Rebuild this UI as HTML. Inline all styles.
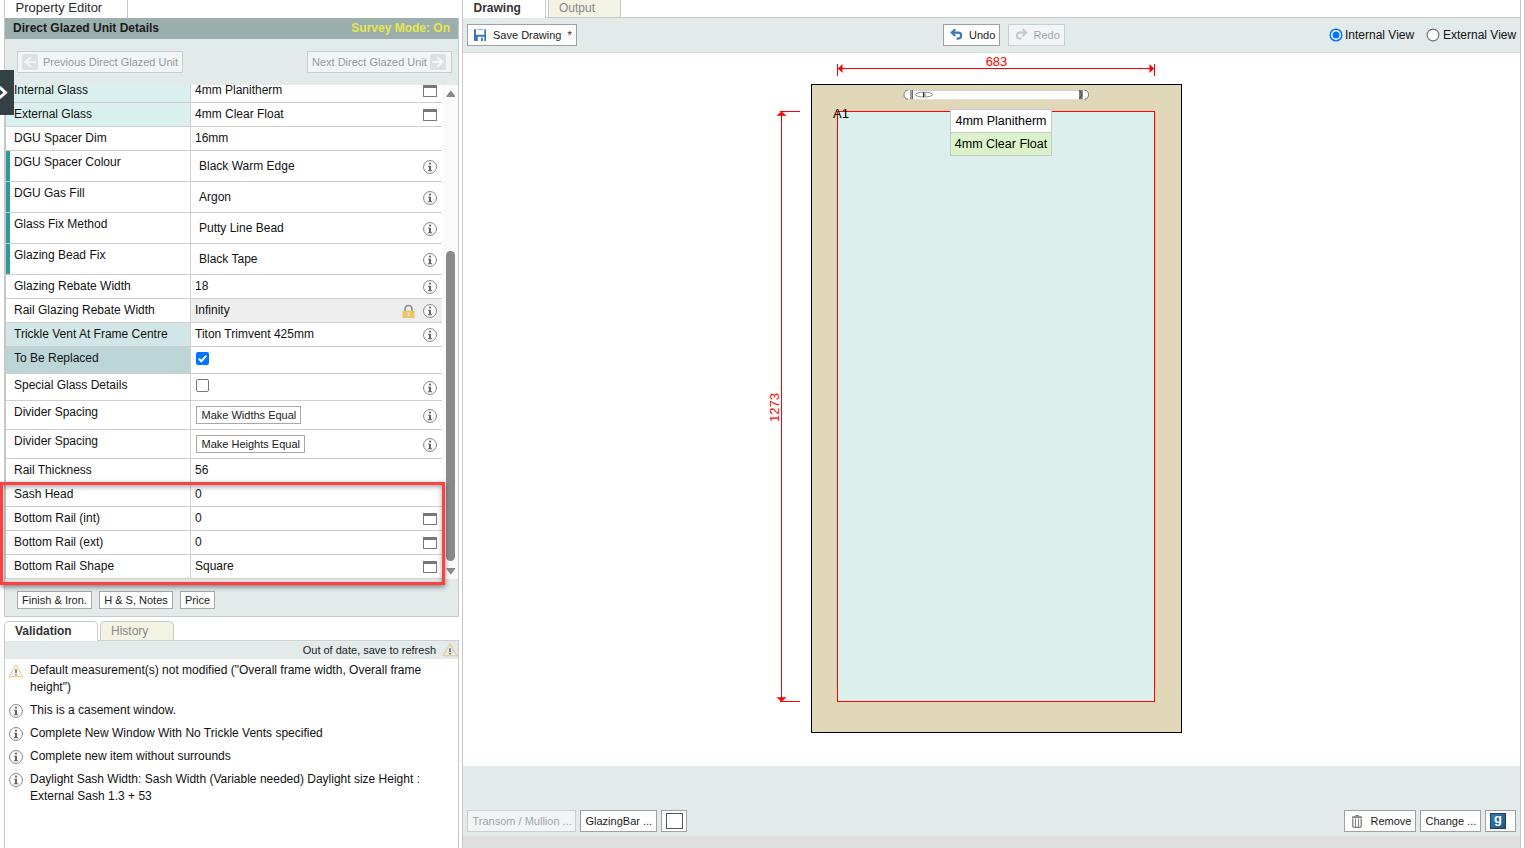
<!DOCTYPE html>
<html><head><meta charset="utf-8"><title>Property Editor</title>
<style>
*{box-sizing:border-box;margin:0;padding:0}
html,body{width:1525px;height:848px;overflow:hidden;background:#fff;font-family:"Liberation Sans",Arial,sans-serif;font-size:12px;color:#111}
.abs{position:absolute}
#left{position:absolute;left:4px;top:0;width:455px;height:848px;border-left:1px solid #c8c8c8;border-right:1px solid #c8c8c8}
#right{position:absolute;left:462px;top:0;width:1059px;height:848px;border-left:1px solid #c8c8c8;border-right:1px solid #c8c8c8}
#outerR{position:absolute;left:1524px;top:0;width:1px;height:848px;background:#c8c8c8}
.tab{position:absolute;top:-4px;height:22px;border:1px solid #c8c8c8;border-bottom:none;border-radius:5px 5px 0 0;background:#fff;font-size:13px;padding:4px 0 0 10px;color:#222;white-space:nowrap}
.tab.off{background:#f3f3e3;color:#888}
.tab.act{font-size:12px;font-weight:bold;color:#333;z-index:3}
.tab.off{font-size:12px}
#pe-box{position:absolute;left:0;top:18px;width:453px;height:599px;border-bottom:1px solid #c8c8c8;background:#e2ebea}
#hdr{position:absolute;left:0;top:0;width:453px;height:21px;background:#9bafaf;font-weight:bold;font-size:12px;color:#1a1a1a;padding:3px 0 0 8px}
#hdr span{position:absolute;right:8px;top:3px;color:#e6e64a}
.navbtn{position:absolute;top:33px;height:22px;border:1px solid #c9cfcf;background:#f1f5f5;color:#9a9a9a;font-size:11px;line-height:20px;white-space:nowrap}
.navbtn i{position:absolute;top:2px;width:16px;height:16px;background:#dce0e0;border-radius:2px}
#grid{position:absolute;left:0;top:67px;width:438px;height:494px;overflow:hidden;background:#fff}
#rows{position:absolute;left:0;top:-6px;width:437px;border-left:1px solid #c6c6c6}
.r{position:relative;width:436px;border-bottom:1px solid #cfcfcf;height:24px}
.r .l{position:absolute;left:0;top:0;bottom:0;width:185px;border-right:1px solid #cfcfcf;padding:4px 0 0 8px;white-space:nowrap}
.r .v{position:absolute;left:185px;top:0;bottom:0;right:0;padding:4px 0 0 4px;white-space:nowrap}
.r.t .l{border-left:4px solid #2e9a98;padding-left:4px;padding-top:4px}
.r.t .v{padding-left:8px;padding-top:8px}
.hl1 .l{background:#daf0ee}
.hl2 .l{background:#d3e6e7}
.hl3 .l{background:#bcd6d8}
.win{position:absolute;left:232px;top:6px;width:14px;height:12px;border:1px solid #777;border-top:3px solid #777;background:#fff}
.info{position:absolute;left:232px;width:14px;height:14px}
.sbtn{display:inline-block;border:1px solid #a8a8a8;background:#fff;font-size:11px;height:18px;line-height:16px;padding:0 0 0 4.5px;margin-top:1px;color:#222;white-space:nowrap}
#sb{position:absolute;left:438px;top:67px;width:15px;height:494px;background:#fafafa}
#sb .th{position:absolute;left:3px;top:166px;width:9px;height:310px;border-radius:5px;background:#8a8a8a}
.fbtn{position:absolute;top:573px;height:18px;border:1px solid #a8a8a8;background:#fff;font-size:11px;line-height:16px;text-align:center;color:#222;white-space:nowrap}
#redbox{position:absolute;left:0px;top:482px;width:445px;height:103px;border:3px solid #fd4040;box-shadow:0 2px 5px rgba(0,0,0,.45), inset 0 2px 5px rgba(0,0,0,.35);pointer-events:none}
#valbar{position:absolute;left:0;top:640px;width:453px;height:19px;background:#e2ebea;border-top:1px solid #d0d0d0;font-size:11px;color:#222;text-align:right;padding:3px 22px 0 0}
.vi{position:absolute;left:25px;font-size:12px;line-height:17px;color:#111;width:420px}
.vic{position:absolute;left:4px;width:14px;height:14px}
.tbtn{position:absolute;height:22px;border:1px solid #a0a0a0;background:#fff;font-size:11px;line-height:20px;color:#222;white-space:nowrap}
.tbtn.dis{color:#a5a5a5;background:#f1f5f5;border-color:#c9cfcf}
#tb{position:absolute;left:0;top:17px;width:1057px;height:36px;background:#e2ebea;border-top:1px solid #c8c8c8;border-bottom:1px solid #d8dede}
#bb{position:absolute;left:0;top:766px;width:1057px;height:70px;background:#e2ebea}
#gb{position:absolute;left:0;top:836px;width:1057px;height:12px;background:#e0e0e0}
.radio{position:absolute;top:29px;width:13px;height:13px;border-radius:50%;border:1.200px solid #6f6f6f;background:#fff}
.radio.on{border:1.600px solid #0075ff}
.radio.on:after{content:"";position:absolute;left:1.300px;top:1.300px;width:7.200px;height:7.200px;border-radius:50%;background:#0075ff}
.rl{position:absolute;top:28px;font-size:12px;color:#111;white-space:nowrap}
</style></head><body>
<svg width="0" height="0" style="position:absolute">
 <defs>
  <symbol id="i" viewBox="0 0 14 14"><circle cx="7" cy="7" r="6.45" fill="#fff" stroke="#777" stroke-width="0.9"/><circle cx="7" cy="3.6" r="1.1" fill="#666"/><path d="M5.100 5.800h2.900v4.500h1.200v0.950h-4.400v-0.950h1.200v-3.600h-0.900z" fill="#666"/></symbol>
  <symbol id="w" viewBox="0 0 16 14"><path d="M8 1 L15 12.8 H1 Z" fill="none" stroke="#f2bd62" stroke-width="0.9" stroke-linejoin="round"/><rect x="7.3" y="5.2" width="1.4" height="3.8" fill="#555"/><rect x="7.3" y="10" width="1.4" height="1.4" fill="#555"/></symbol>
 </defs>
</svg>
<div id="left">
  <div class="tab" style="left:-1px;width:124px;color:#2a2a2a;z-index:3;padding-top:3px;padding-left:10.500px">Property Editor</div>
  <div id="pe-box">
    <div id="hdr">Direct Glazed Unit Details<span>Survey Mode: On</span></div>
    <div class="navbtn" style="left:12px;width:166px;padding-left:25px"><i style="left:4px"></i><svg class="abs" style="left:4px;top:2px" width="16" height="16" viewBox="0 0 16 16"><path d="M13.700 8H3.200M8.800 3.200L3.400 8l5.400 4.800" fill="none" stroke="#f2f5f5" stroke-width="2.100"/></svg>Previous Direct Glazed Unit</div>
    <div class="navbtn" style="left:302px;width:145px;padding-left:4px">Next Direct Glazed Unit<i style="left:122px"></i><svg class="abs" style="left:122px;top:2px" width="16" height="16" viewBox="0 0 16 16"><path d="M2.300 8H12.800M7.200 3.200L12.600 8l-5.400 4.800" fill="none" stroke="#f2f5f5" stroke-width="2.100"/></svg></div>
    <div id="grid"><div id="rows">
      <div class="r hl1"><div class="l">Internal Glass</div><div class="v">4mm Planitherm<b class="win"></b></div></div>
      <div class="r hl1"><div class="l">External Glass</div><div class="v">4mm Clear Float<b class="win"></b></div></div>
      <div class="r"><div class="l">DGU Spacer Dim</div><div class="v">16mm</div></div>
      <div class="r t" style="height:31px"><div class="l">DGU Spacer Colour</div><div class="v">Black Warm Edge<svg class="info" style="top:9px"><use href="#i"/></svg></div></div>
      <div class="r t" style="height:31px"><div class="l">DGU Gas Fill</div><div class="v">Argon<svg class="info" style="top:9px"><use href="#i"/></svg></div></div>
      <div class="r t" style="height:31px"><div class="l">Glass Fix Method</div><div class="v">Putty Line Bead<svg class="info" style="top:9px"><use href="#i"/></svg></div></div>
      <div class="r t" style="height:31px"><div class="l">Glazing Bead Fix</div><div class="v">Black Tape<svg class="info" style="top:9px"><use href="#i"/></svg></div></div>
      <div class="r"><div class="l">Glazing Rebate Width</div><div class="v">18<svg class="info" style="top:5px"><use href="#i"/></svg></div></div>
      <div class="r"><div class="l">Rail Glazing Rebate Width</div><div class="v" style="background:#eee">Infinity<svg class="abs" style="left:211px;top:5px" width="13" height="14" viewBox="0 0 13 14"><path d="M3 7V5a3.5 3.5 0 0 1 7 0v2" fill="none" stroke="#8a8a8a" stroke-width="1.6"/><rect x="0.5" y="6.7" width="12" height="7.3" fill="#ecc46a"/><rect x="5.8" y="8.6" width="1.4" height="1.3" fill="#fff"/><rect x="5.8" y="10.7" width="1.4" height="1.3" fill="#fff"/></svg><svg class="info" style="top:5px"><use href="#i"/></svg></div></div>
      <div class="r hl2"><div class="l">Trickle Vent At Frame Centre</div><div class="v">Titon Trimvent 425mm<svg class="info" style="top:5px"><use href="#i"/></svg></div></div>
      <div class="r hl3" style="height:27px"><div class="l">To Be Replaced</div><div class="v"><svg class="abs" style="left:5px;top:5px" width="13" height="13" viewBox="0 0 13 13"><rect width="13" height="13" rx="2" fill="#0075ff"/><path d="M2.800 6.600l2.500 2.600L10.300 3.700" fill="none" stroke="#fff" stroke-width="2"/></svg></div></div>
      <div class="r" style="height:27px"><div class="l">Special Glass Details</div><div class="v"><span class="abs" style="left:5px;top:5px;width:13px;height:13px;border:1px solid #767676;border-radius:2px;background:#fff"></span><svg class="info" style="top:7px"><use href="#i"/></svg></div></div>
      <div class="r" style="height:29px"><div class="l">Divider Spacing</div><div class="v" style="padding-left:5px"><span class="sbtn" style="width:105px">Make Widths Equal</span><svg class="info" style="top:8px"><use href="#i"/></svg></div></div>
      <div class="r" style="height:29px"><div class="l">Divider Spacing</div><div class="v" style="padding-left:5px"><span class="sbtn" style="width:109px">Make Heights Equal</span><svg class="info" style="top:8px"><use href="#i"/></svg></div></div>
      <div class="r"><div class="l">Rail Thickness</div><div class="v">56</div></div>
      <div class="r"><div class="l">Sash Head</div><div class="v">0</div></div>
      <div class="r"><div class="l">Bottom Rail (int)</div><div class="v">0<b class="win"></b></div></div>
      <div class="r"><div class="l">Bottom Rail (ext)</div><div class="v">0<b class="win"></b></div></div>
      <div class="r"><div class="l">Bottom Rail Shape</div><div class="v">Square<b class="win"></b></div></div>
    </div></div>
    <div id="sb"><div class="th"></div>
      <svg class="abs" style="left:3px;top:5px" width="10" height="7" viewBox="0 0 10 7"><path d="M1 6.300L4.800 1.300l3.800 5z" fill="#8a8a8a" stroke="#8a8a8a" stroke-width="1.200" stroke-linejoin="round"/></svg>
      <svg class="abs" style="left:3px;top:483px" width="10" height="7" viewBox="0 0 10 7"><path d="M1 0.700L4.800 5.700l3.800-5z" fill="#8a8a8a" stroke="#8a8a8a" stroke-width="1.200" stroke-linejoin="round"/></svg>
    </div>
    <div class="fbtn" style="left:12px;width:75px">Finish &amp; Iron.</div>
    <div class="fbtn" style="left:94px;width:74px">H &amp; S, Notes</div>
    <div class="fbtn" style="left:175px;width:35px">Price</div>
  </div>
  <div class="tab act" style="left:-1px;top:621px;height:20px;width:94px;padding-top:2px">Validation</div>
  <div class="tab off" style="left:95px;top:621px;height:19px;width:74px;padding-top:2px">History</div>
  <div id="valbar">Out of date, save to refresh<svg class="abs" style="right:0px;top:2px" width="16" height="14"><use href="#w"/></svg></div>
  <svg class="vic" style="top:664px;width:16px;left:3px"><use href="#w"/></svg><div class="vi" style="top:662px">Default measurement(s) not modified ("Overall frame width, Overall frame height")</div>
  <svg class="vic" style="top:704px"><use href="#i"/></svg><div class="vi" style="top:702px">This is a casement window.</div>
  <svg class="vic" style="top:727px"><use href="#i"/></svg><div class="vi" style="top:725px">Complete New Window With No Trickle Vents specified</div>
  <svg class="vic" style="top:750px"><use href="#i"/></svg><div class="vi" style="top:748px">Complete new item without surrounds</div>
  <svg class="vic" style="top:773px"><use href="#i"/></svg><div class="vi" style="top:771px">Daylight Sash Width: Sash Width (Variable needed) Daylight size Height : External Sash 1.3 + 53</div>
</div>
<div class="abs" style="left:458px;top:617px;width:1px;height:23px;background:#fff"></div>
<div class="abs" style="left:458px;top:0;width:1px;height:18px;background:#fff"></div>
<div class="abs" style="left:4px;top:617px;width:1px;height:7px;background:#fff"></div>
<div id="redbox"></div>
<div class="abs" style="left:0;top:70px;width:14px;height:44.500px;background:#334144"><svg class="abs" style="left:0;top:15px" width="10" height="15" viewBox="0 0 10 15"><path d="M-0.500 2.200L5.600 7.600 -0.500 13" fill="none" stroke="#fff" stroke-width="2.900"/></svg></div>
<div id="right">
  <div class="tab act" style="left:-1px;width:84px;padding-left:10.5px">Drawing</div>
  <div class="tab off" style="left:85px;width:73px;padding-left:10px">Output</div>
  <div id="tb"></div>
  <div class="tbtn" style="left:4px;top:24px;width:110px;padding-left:25px"><svg class="abs" style="left:6px;top:4px" width="12.300" height="12" viewBox="0 0 12.300 12"><path d="M0.800 0.200H2v5.600h8.300V0.200h1.200a0.800 0.800 0 0 1 0.800 0.800V11.200a0.800 0.800 0 0 1-0.800 0.800H10.300V7.800H3.800V12H0.800a0.800 0.800 0 0 1-0.800-0.800V1a0.800 0.800 0 0 1 0.800-0.800z" fill="#3a76b6"/><rect x="7.100" y="8.600" width="1.800" height="3.400" fill="#3a76b6"/><rect x="3" y="0.300" width="6.300" height="0.700" fill="#8c8c8c"/></svg>Save Drawing&nbsp; *</div>
  <div class="tbtn" style="left:480px;top:24px;width:57px;padding-left:25px"><svg class="abs" style="left:6px;top:3px" width="13" height="12" viewBox="0 0 13 12"><path d="M5.300 1.200L1.700 4.600l3.600 3.400M1.900 4.600h6.300a3 3 0 0 1 0 6H6.600" fill="none" stroke="#3b78b8" stroke-width="2.100"/></svg>Undo</div>
  <div class="tbtn dis" style="left:545px;top:24px;width:57px;padding-left:24.500px"><svg class="abs" style="left:6px;top:3px" width="13" height="12" viewBox="0 0 13 12"><path d="M7.700 1.200l3.600 3.400-3.600 3.400M11.100 4.600H4.800a3 3 0 0 0 0 6h1.600" fill="none" stroke="#c6caca" stroke-width="2.100"/></svg>Redo</div>
  <svg class="abs" style="left:865.600px;top:27.800px" width="14" height="14" viewBox="0 0 14 14"><circle cx="7" cy="7" r="5.800" fill="#fff" stroke="#0075ff" stroke-width="1.500"/><circle cx="7" cy="7" r="3.500" fill="#0075ff"/></svg><div class="rl" style="left:882px">Internal View</div>
  <svg class="abs" style="left:963px;top:27.900px" width="14" height="14" viewBox="0 0 14 14"><circle cx="7" cy="7" r="5.900" fill="#fff" stroke="#707070" stroke-width="1.100"/></svg><div class="rl" style="left:980px">External View</div>
  <svg class="abs" style="left:0;top:53px" width="1057" height="713" viewBox="463 53 1057 713" font-family="Liberation Sans, Arial, sans-serif" shape-rendering="crispEdges">
    <rect x="811.5" y="84.5" width="370" height="648" fill="#e0d6b8" stroke="#000" stroke-width="1"/>
    <rect x="837.5" y="111.5" width="317" height="590" fill="#dbf0ec" stroke="#f00" stroke-width="1"/>
    <!-- trickle vent -->
    <g shape-rendering="auto"><rect x="903.500" y="90" width="185.500" height="9.300" rx="4.650" fill="#fff"/>
    <path d="M912 90.400H1080" stroke="#c3c7cc" stroke-width="0.900" fill="none"/>
    <path d="M908.150 90.100A4.650 4.600 0 0 0 908.150 99.250" stroke="#5a5a5a" stroke-width="0.850" fill="none"/>
    <path d="M1084.350 90.100A4.650 4.600 0 0 1 1084.350 99.250" stroke="#5a5a5a" stroke-width="0.850" fill="none"/>
    <rect x="910.100" y="90" width="1" height="9.300" fill="#8c8c8c"/><rect x="911.400" y="90" width="1.600" height="9.300" fill="#6c6c6c"/>
    <rect x="1079" y="90" width="3.800" height="9.300" fill="#7c7c7c"/><path d="M1079.600 90.500l2.400 4-2.400 4.300" stroke="#3a3a3a" stroke-width="0.800" fill="none"/>
    <ellipse cx="924" cy="94.600" rx="8.800" ry="2.400" fill="#fff" stroke="#444" stroke-width="0.600"/><rect x="923" y="92.200" width="1.200" height="5" fill="#222"/><rect x="924.200" y="92.400" width="1.600" height="4.600" fill="#a8a8a8"/></g>
    <!-- horizontal dim -->
    <g stroke="#f00" stroke-width="1" fill="#f00"><path d="M837.5 64v12M1154.5 64v12M838 68.500h316" fill="none"/><path d="M838 68.500l4.500-4.500v9zM1154 68.500l-4.500-4.500v9z" stroke="none" shape-rendering="auto"/>
    <path d="M781.500 112v589M780 111.500h20M780 701.500h20" fill="none"/><path d="M781.500 111.500l-5.300 4.300h10.600zM781.500 701.500l-5.300-4.300h10.600z" stroke="none" shape-rendering="auto"/></g>
    <text x="996.5" y="66" font-size="13" fill="#f00" text-anchor="middle">683</text>
    <text transform="translate(779,407.5) rotate(-90)" font-size="13" fill="#f00" text-anchor="middle">1273</text>
    <text x="833" y="118" font-size="13" fill="#000">A1</text>
    <g shape-rendering="crispEdges"><rect x="950.5" y="109.500" width="101" height="23" fill="#fff" stroke="#c8c8c8"/><rect x="950.500" y="132.500" width="101" height="23" fill="#dbf3c9" stroke="#c8c8c8"/></g>
    <text x="1001" y="125" font-size="12.5" fill="#000" text-anchor="middle">4mm Planitherm</text>
    <text x="1001" y="148" font-size="12.5" fill="#000" text-anchor="middle">4mm Clear Float</text>
  </svg>
  <div id="bb"></div><div id="gb"></div>
  <div class="tbtn dis" style="left:4px;top:810px;width:109px;padding-left:4.5px">Transom / Mullion ...</div>
  <div class="tbtn" style="left:117px;top:810px;width:77px;padding-left:4.5px">GlazingBar ...</div>
  <div class="tbtn" style="left:198px;top:810px;width:26px"><span class="abs" style="left:4px;top:2px;width:17px;height:16px;border:1px solid #555;background:#fff"></span></div>
  <div class="tbtn" style="left:881px;top:810px;width:72px;padding-left:25.5px"><svg class="abs" style="left:7px;top:4px" width="10" height="13" viewBox="0 0 10 13"><rect x="3.200" y="0" width="3.800" height="1.600" rx="0.500" fill="#858585"/><rect x="0" y="1.200" width="10" height="1.800" rx="0.600" fill="#808080"/><path d="M0.800 3.400V11a1.400 1.400 0 0 0 1.400 1.400H7.800A1.400 1.400 0 0 0 9.200 11V3.400" fill="none" stroke="#808080" stroke-width="1.300"/><path d="M3.500 3.400V12M6.500 3.400V12" fill="none" stroke="#858585" stroke-width="1.100"/></svg>Remove</div>
  <div class="tbtn" style="left:957px;top:810px;width:61px;padding-left:4.5px">Change ...</div>
  <div class="tbtn" style="left:1022px;top:810px;width:31px"><span class="abs" style="left:4px;top:2px;width:16px;height:16px;background:linear-gradient(135deg,#3a7cb0,#15588a);box-shadow:inset 0 0 0 1px rgba(25,50,75,.75);color:#fff;font-size:13px;font-weight:bold;line-height:12.500px;text-align:center">g</span></div>
</div>
<div id="outerR"></div>
</body></html>
